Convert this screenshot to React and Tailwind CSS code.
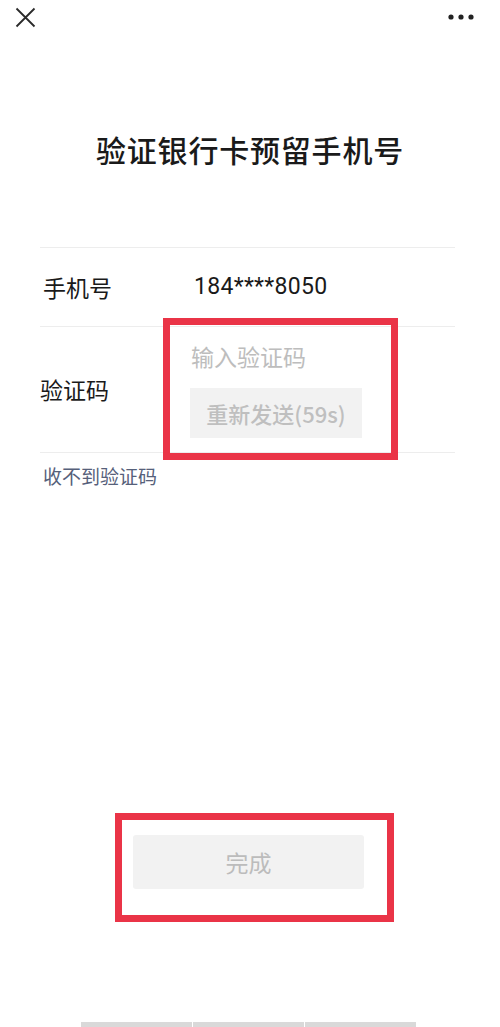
import React from "react";

const font = { fontFamily: '"Noto Sans CJK SC", "Noto Sans", sans-serif' };

export default function App() {
  return (
    <div
      className="relative w-[500px] h-[1027px] bg-white overflow-hidden text-[#1a1a1a]"
      style={font}
    >
      {/* top bar */}
      <div className="flex items-center justify-between h-[34px] pl-[15px] pr-[26px]">
        <svg width="21" height="21" viewBox="0 0 21 21">
          <path d="M1.5 1.5 L19.5 19.5 M19.5 1.5 L1.5 19.5" stroke="#2a2a2a" strokeWidth="1.8" />
        </svg>
        <svg width="26" height="6" viewBox="0 0 26 6">
          <circle cx="3" cy="3" r="2.6" fill="#222" />
          <circle cx="13" cy="3" r="2.6" fill="#222" />
          <circle cx="23" cy="3" r="2.6" fill="#222" />
        </svg>
      </div>

      {/* title */}
      <h1 className="mt-[97px] text-center text-[30px] leading-[36px] font-medium tracking-[0.8px]">
        验证银行卡预留手机号
      </h1>

      {/* form */}
      <div className="ml-[40px] mr-[45px] mt-[80px] border-t border-[#ededed]">
        <div className="flex items-center h-[79px] border-b border-[#ededed]">
          <div className="w-[150px] pl-[3px] text-[23px]">手机号</div>
          <div className="pl-[4px] text-[23px] tracking-[0.3px]" style={{ fontFamily: 'Roboto, "Noto Sans", sans-serif' }}>
            184****8050
          </div>
        </div>
        <div className="flex items-center h-[126px] border-b border-[#ededed]">
          <div className="w-[150px] text-[23px]">验证码</div>
          <div className="flex flex-col items-start pt-[1px]">
            <div className="ml-[1px] text-[23px] leading-[28px] text-[#bdbdbd]">输入验证码</div>
            <button className="mt-[18px] w-[172px] h-[50px] bg-[#f2f2f2] text-[22px] font-medium text-[#bfbfbf]">
              重新发送(59s)
            </button>
          </div>
        </div>
        <div className="mt-[10px] pl-[3px] text-[19px] leading-[26px] text-[#56607a]">收不到验证码</div>
      </div>

      {/* complete button */}
      <div className="mt-[346px] flex justify-center pr-[3px]">
        <button className="w-[231px] h-[54px] rounded-[3px] bg-[#f2f2f2] text-[23px] text-[#bcbcbc]">
          完成
        </button>
      </div>

      {/* bottom strip */}
      <div className="absolute left-[81px] bottom-0 flex w-[335px] h-[5px] gap-[1px]">
        <div className="flex-1 bg-[#d9d9d9]" />
        <div className="flex-1 bg-[#d9d9d9]" />
        <div className="flex-1 bg-[#d9d9d9]" />
      </div>

      {/* annotation boxes */}
      <div className="absolute left-[163px] top-[318px] w-[235px] h-[142px] border-[7px] border-[#ea3447]" />
      <div className="absolute left-[115px] top-[813px] w-[279px] h-[109px] border-[7px] border-[#ea3447]" />
    </div>
  );
}
